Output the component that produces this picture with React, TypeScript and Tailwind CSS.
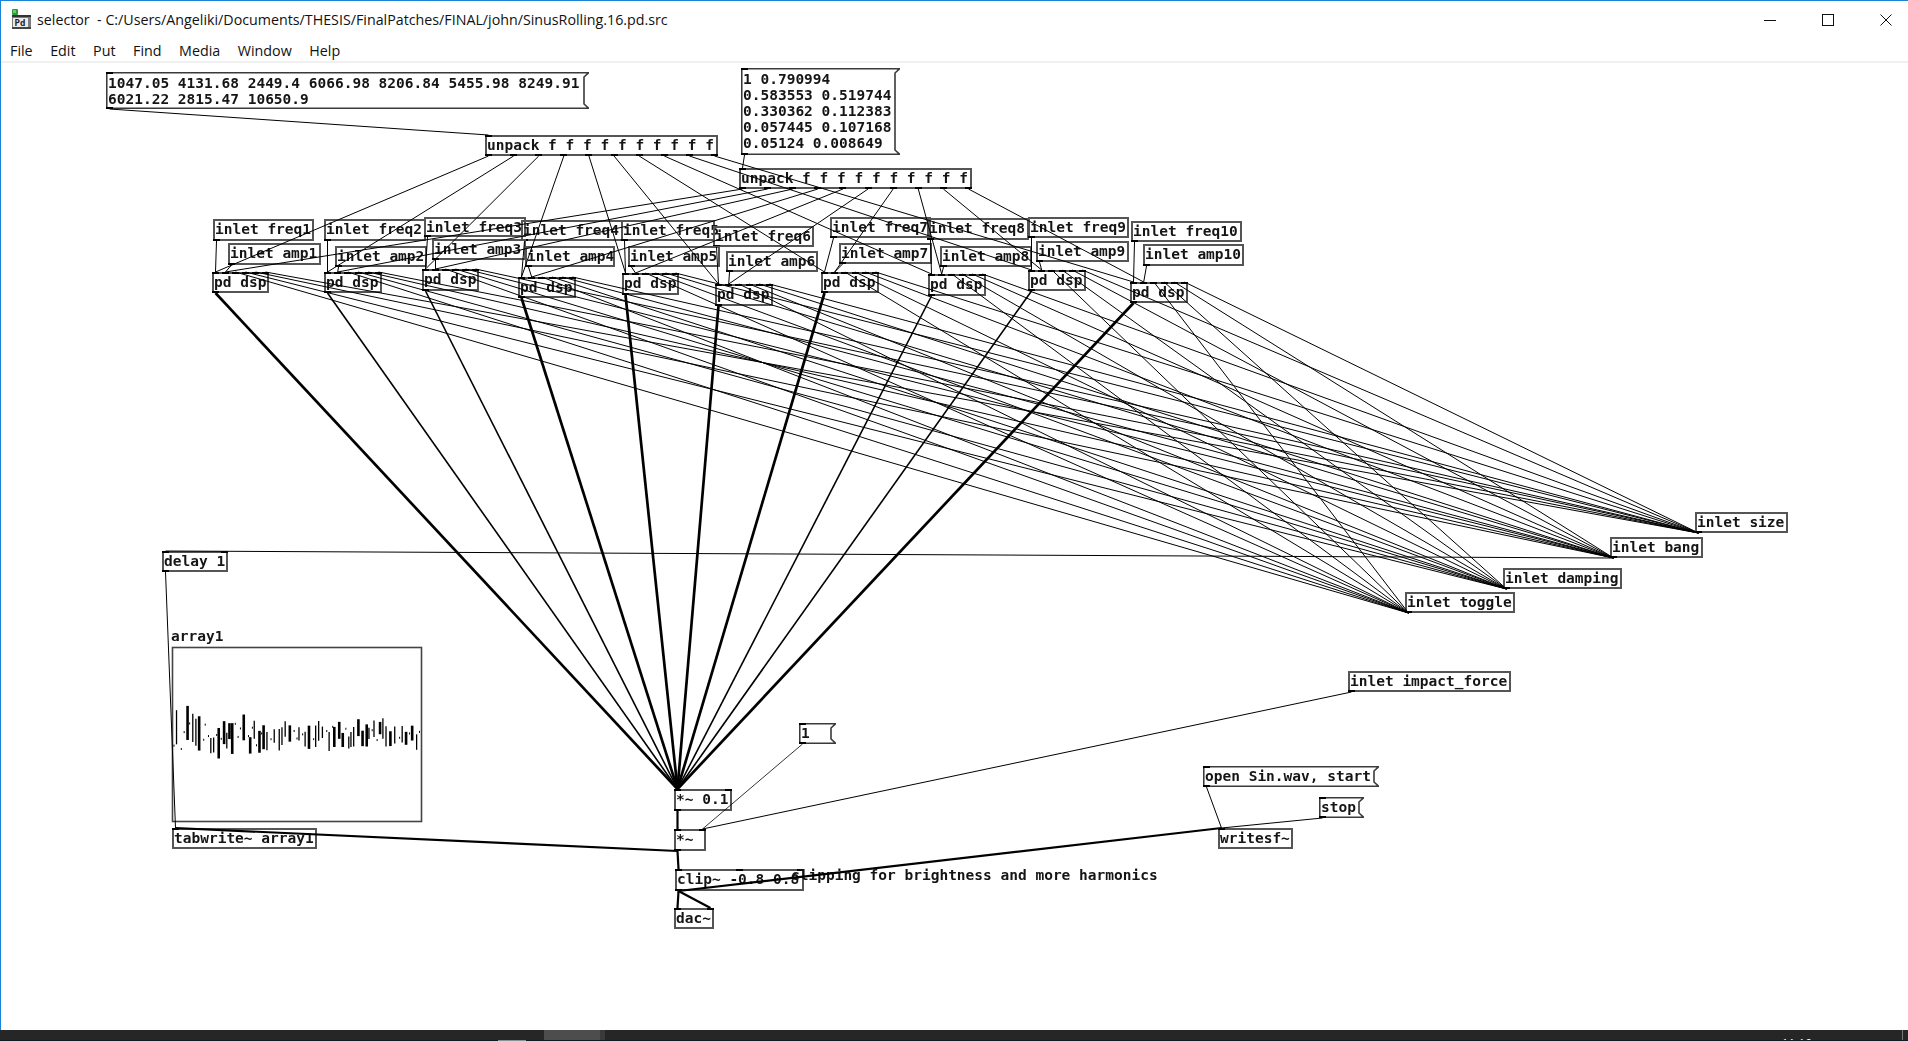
import React from "react";

type B = { x: number; y: number; r: number; b: number; t: string; i: number; o: number; msg?: boolean };
const bx = (x: number, y: number, r: number, b: number, t: string, i: number, o: number, msg = false): B => ({ x, y, r, b, t, i, o, msg });

const msg1 = bx(106, 72, 589, 109, "1047.05 4131.68 2449.4 6066.98 8206.84 5455.98 8249.91\n6021.22 2815.47 10650.9", 1, 1, true);
const msg2 = bx(741, 68, 900, 155, "1 0.790994\n0.583553 0.519744\n0.330362 0.112383\n0.057445 0.107168\n0.05124 0.008649", 1, 1, true);
const unpack1 = bx(485, 135, 718, 156, "unpack f f f f f f f f f f", 1, 10);
const unpack2 = bx(739, 168, 972, 189, "unpack f f f f f f f f f f", 1, 10);

const freq: B[] = [
  bx(213, 219, 314, 241, "inlet freq1", 0, 1),
  bx(324, 219, 426, 241, "inlet freq2", 0, 1),
  bx(424, 217, 526, 237, "inlet freq3", 0, 1),
  bx(521, 220, 623, 241, "inlet freq4", 0, 1),
  bx(621, 220, 715, 241, "inlet freq5", 0, 1),
  bx(713, 226, 814, 247, "inlet freq6", 0, 1),
  bx(830, 217, 931, 238, "inlet freq7", 0, 1),
  bx(927, 218, 1029, 240, "inlet freq8", 0, 1),
  bx(1028, 217, 1129, 238, "inlet freq9", 0, 1),
  bx(1131, 221, 1242, 242, "inlet freq10", 0, 1),
];
const amp: B[] = [
  bx(228, 243, 321, 265, "inlet amp1", 0, 1),
  bx(335, 246, 427, 267, "inlet amp2", 0, 1),
  bx(432, 239, 526, 260, "inlet amp3", 0, 1),
  bx(525, 246, 615, 267, "inlet amp4", 0, 1),
  bx(628, 246, 720, 267, "inlet amp5", 0, 1),
  bx(726, 251, 818, 272, "inlet amp6", 0, 1),
  bx(839, 243, 932, 264, "inlet amp7", 0, 1),
  bx(940, 246, 1032, 267, "inlet amp8", 0, 1),
  bx(1036, 241, 1129, 262, "inlet amp9", 0, 1),
  bx(1143, 244, 1244, 266, "inlet amp10", 0, 1),
];
const dsp: B[] = [
  bx(212, 272, 269, 293, "pd dsp", 6, 1),
  bx(324, 272, 382, 293, "pd dsp", 6, 1),
  bx(422, 269, 479, 291, "pd dsp", 6, 1),
  bx(518, 277, 576, 298, "pd dsp", 6, 1),
  bx(622, 273, 679, 295, "pd dsp", 6, 1),
  bx(715, 284, 773, 306, "pd dsp", 6, 1),
  bx(821, 272, 879, 293, "pd dsp", 6, 1),
  bx(928, 274, 986, 296, "pd dsp", 6, 1),
  bx(1028, 270, 1086, 291, "pd dsp", 6, 1),
  bx(1130, 282, 1188, 303, "pd dsp", 6, 1),
];
const thick = [true, false, false, true, true, true, true, false, false, true];

const size = bx(1695, 512, 1788, 533, "inlet size", 0, 1);
const bang = bx(1610, 537, 1703, 558, "inlet bang", 0, 1);
const damping = bx(1503, 568, 1622, 589, "inlet damping", 0, 1);
const toggle = bx(1405, 592, 1515, 613, "inlet toggle", 0, 1);
const impact = bx(1348, 671, 1511, 692, "inlet impact_force", 0, 1);
const delay = bx(162, 551, 228, 572, "delay 1", 2, 1);
const tabwrite = bx(172, 828, 317, 849, "tabwrite~ array1", 1, 0);
const one = bx(799, 723, 836, 744, "1", 1, 1, true);
const mul01 = bx(674, 789, 732, 811, "*~ 0.1", 2, 1);
const mul = bx(674, 829, 706, 851, "*~", 2, 1);
const clip = bx(675, 869, 804, 891, "clip~ -0.8 0.8", 3, 1);
const dac = bx(674, 908, 714, 929, "dac~", 2, 0);
const open = bx(1203, 766, 1379, 787, "open Sin.wav, start", 1, 1, true);
const stop = bx(1319, 797, 1364, 818, "stop", 1, 1, true);
const writesf = bx(1218, 828, 1293, 849, "writesf~", 1, 0);

const boxes: B[] = [msg1, msg2, unpack1, unpack2, ...freq, ...amp, ...dsp, size, bang, damping, toggle, impact, delay, tabwrite, one, mul01, mul, clip, dac, open, stop, writesf];

const io = (b: B, k: number, n: number) => b.x + 3.5 + (n > 1 ? ((b.r - b.x - 7) * k) / (n - 1) : 0);
const OX = 1;
const OY = 63;

type W = [number, number, number, number, number];
const w = (a: B, ao: number, c: B, ci: number, sw = 1): W => [io(a, ao, a.o), a.b, io(c, ci, c.i), c.y, sw];

const wires: W[] = [
  w(msg1, 0, unpack1, 0),
  w(msg2, 0, unpack2, 0),
  w(bang, 0, delay, 0),
  w(delay, 0, tabwrite, 0),
  w(one, 0, mul, 1, 0.8),
  w(impact, 0, mul, 1),
  w(open, 0, writesf, 0),
  w(stop, 0, writesf, 0),
  w(mul01, 0, mul, 0, 2.2),
  w(mul, 0, clip, 0, 2.2),
  w(mul, 0, tabwrite, 0, 2.2),
  w(clip, 0, dac, 0, 2.2),
  w(clip, 0, dac, 1, 2.2),
  w(clip, 0, writesf, 0, 2.2),
];
dsp.forEach((d, n) => {
  wires.push(w(unpack1, n, d, 0));
  wires.push(w(unpack2, n, d, 1));
  wires.push(w(freq[n], 0, d, 0));
  wires.push(w(amp[n], 0, d, 1));
  wires.push(w(toggle, 0, d, 2));
  wires.push(w(damping, 0, d, 3));
  wires.push(w(bang, 0, d, 4));
  wires.push(w(size, 0, d, 5));
  wires.push(w(d, 0, mul01, 0, thick[n] ? 2.7 : 1.6));
});

const wave = (() => {
  const out: [number, number, number, number][] = [];
  let s = 424242;
  const rnd = () => {
    s = (s * 16807) % 2147483647;
    return s / 2147483647;
  };
  let x = 174;
  while (x < 421) {
    const env = 11 + 14 * Math.exp(-(x - 174) / 110);
    const big = rnd() > 0.35;
    const mid = 735 + (rnd() * 2 - 1) * env * 0.6;
    const h = big ? env * (0.35 + rnd() * 0.5) : 1;
    const sw = big ? (rnd() > 0.6 ? 2.6 : 1.3) : 1;
    out.push([x, mid - h, mid + h, sw]);
    x += big ? 2 + rnd() * 3 : 1.5 + rnd() * 2;
  }
  return out;
})();

function Box({ b }: { b: B }) {
  const W = b.r - b.x;
  const H = b.b - b.y;
  const multi = b.t.includes("\n");
  return (
    <div
      className="absolute"
      style={{ left: b.x - OX, top: b.y - OY, width: W, height: H }}
    >
      {b.msg ? (
        <svg className="absolute inset-0" width={W} height={H}>
          <path
            d={`M0.75 0.75 H${W - 0.5} L${W - 5} 5 V${H - 5} L${W - 0.5} ${H - 0.75} H0.75 Z`}
            fill="none"
            stroke="#3a3a3a"
            strokeWidth="1.6"
          />
        </svg>
      ) : (
        <div className="absolute inset-0 border-2 border-[#555]" />
      )}
      <div className={`absolute left-[2px] ${multi ? "top-[3px]" : "top-[2px]"} whitespace-pre text-[14.5px] leading-[16px] font-bold font-['DejaVu_Sans_Mono',monospace] text-[#151515]`}>
        {b.t}
      </div>
      {Array.from({ length: b.i }).map((_, k) => (
        <div
          key={k}
          className="absolute top-0 h-[2px] w-[7px] bg-black"
          style={{ left: io(b, k, b.i) - b.x - 3.5 }}
        />
      ))}
      {Array.from({ length: b.o }).map((_, k) => (
        <div
          key={k}
          className="absolute bottom-0 h-[2px] w-[7px] bg-black"
          style={{ left: io(b, k, b.o) - b.x - 3.5 }}
        />
      ))}
    </div>
  );
}

function PdIcon() {
  return (
    <svg width="20" height="21" viewBox="0 0 20 21" className="shrink-0">
      <rect x="1" y="0" width="6" height="6" rx="1" fill="#2f9a3c" />
      <rect x="2" y="1" width="3" height="3" fill="#5cd06a" />
      <rect x="1" y="6" width="19" height="14" fill="#7d7d7d" />
      <rect x="1" y="6" width="19" height="2" fill="#333" />
      <rect x="2" y="9" width="15" height="9" fill="#ececec" />
      <rect x="1" y="18" width="19" height="2" fill="#444" />
      <text x="3.5" y="16.5" fontSize="9" fontWeight="700" fontFamily="DejaVu Sans Mono, monospace" fill="#222">Pd</text>
    </svg>
  );
}

export default function App() {
  return (
    <div className="flex h-[1041px] w-[1908px] flex-col overflow-hidden bg-white font-['Open_Sans',sans-serif]">
      <div className="flex min-h-0 flex-1 flex-col border-l border-t border-[#1883d7]">
        <div className="flex h-[35px] items-center pl-[10px] pr-[16px] pt-[2px] text-[14.25px] text-[#111]">
          <PdIcon />
          <span className="ml-[6px] whitespace-pre">selector  - C:/Users/Angeliki/Documents/THESIS/FinalPatches/FINAL/john/SinusRolling.16.pd.src</span>
          <div className="ml-auto flex items-center gap-[46px]">
            <svg width="12" height="12" viewBox="0 0 12 12"><path d="M0 6.5H12" stroke="#111" /></svg>
            <svg width="12" height="12" viewBox="0 0 12 12"><rect x="0.5" y="0.5" width="11" height="11" fill="none" stroke="#111" /></svg>
            <svg width="12" height="12" viewBox="0 0 12 12"><path d="M0.5 0.5L11.5 11.5M11.5 0.5L0.5 11.5" stroke="#111" /></svg>
          </div>
        </div>
        <div className="flex h-[27px] items-center gap-[17.5px] border-b-2 border-[#f0f0f0] pl-[9px] pt-[4px] text-[14.3px] text-[#111]">
          <span>File</span>
          <span>Edit</span>
          <span>Put</span>
          <span>Find</span>
          <span>Media</span>
          <span>Window</span>
          <span>Help</span>
        </div>
        <div className="relative min-h-0 flex-1 blur-[0.35px]">
          <svg className="absolute inset-0" width="1907" height="967" viewBox={`${OX} ${OY} 1907 967`} fill="none">
            <rect x="172.5" y="647.5" width="249" height="174" stroke="#444" strokeWidth="1.6" />
            {wave.map(([x, a, c, sw], k) => (
              <line key={k} x1={x} y1={a} x2={x} y2={c} stroke="#000" strokeWidth={sw} />
            ))}
          </svg>
          <div className="absolute left-[170px] top-[565px] text-[14.5px] leading-[16px] font-bold font-['DejaVu_Sans_Mono',monospace] text-[#151515]">array1</div>
          {boxes.map((b, k) => (
            <Box key={k} b={b} />
          ))}
          <div className="absolute left-[790px] top-[804px] whitespace-pre text-[14.5px] leading-[16px] font-bold font-['DejaVu_Sans_Mono',monospace] text-[#151515]">clipping for brightness and more harmonics</div>
          <svg className="absolute inset-0" width="1907" height="967" viewBox={`${OX} ${OY} 1907 967`} fill="none">
            {wires.map(([a, b, c, d, sw], k) => (
              <line key={k} x1={a} y1={b} x2={c} y2={d} stroke="#000" strokeWidth={sw} />
            ))}
          </svg>
        </div>
      </div>
      <div className="flex h-[11px] flex-col bg-[#262626]">
        <div className="flex h-[10px] overflow-hidden">
          <div className="ml-[544px] h-full w-[56px] bg-[#4d4d4d]" />
          <div className="h-full w-[5px] bg-[#3a3a3a]" />
          <div className="ml-auto pr-[90px] pt-[7px] text-[12px] leading-[14px] text-white">11:19</div>
          <div className="mr-[5px] h-full w-px bg-[#777]" />
        </div>
        <div className="flex h-px bg-[#0d1c26]">
          <div className="ml-[498px] h-full w-[28px] bg-[#8a9296]" />
        </div>
      </div>
    </div>
  );
}
